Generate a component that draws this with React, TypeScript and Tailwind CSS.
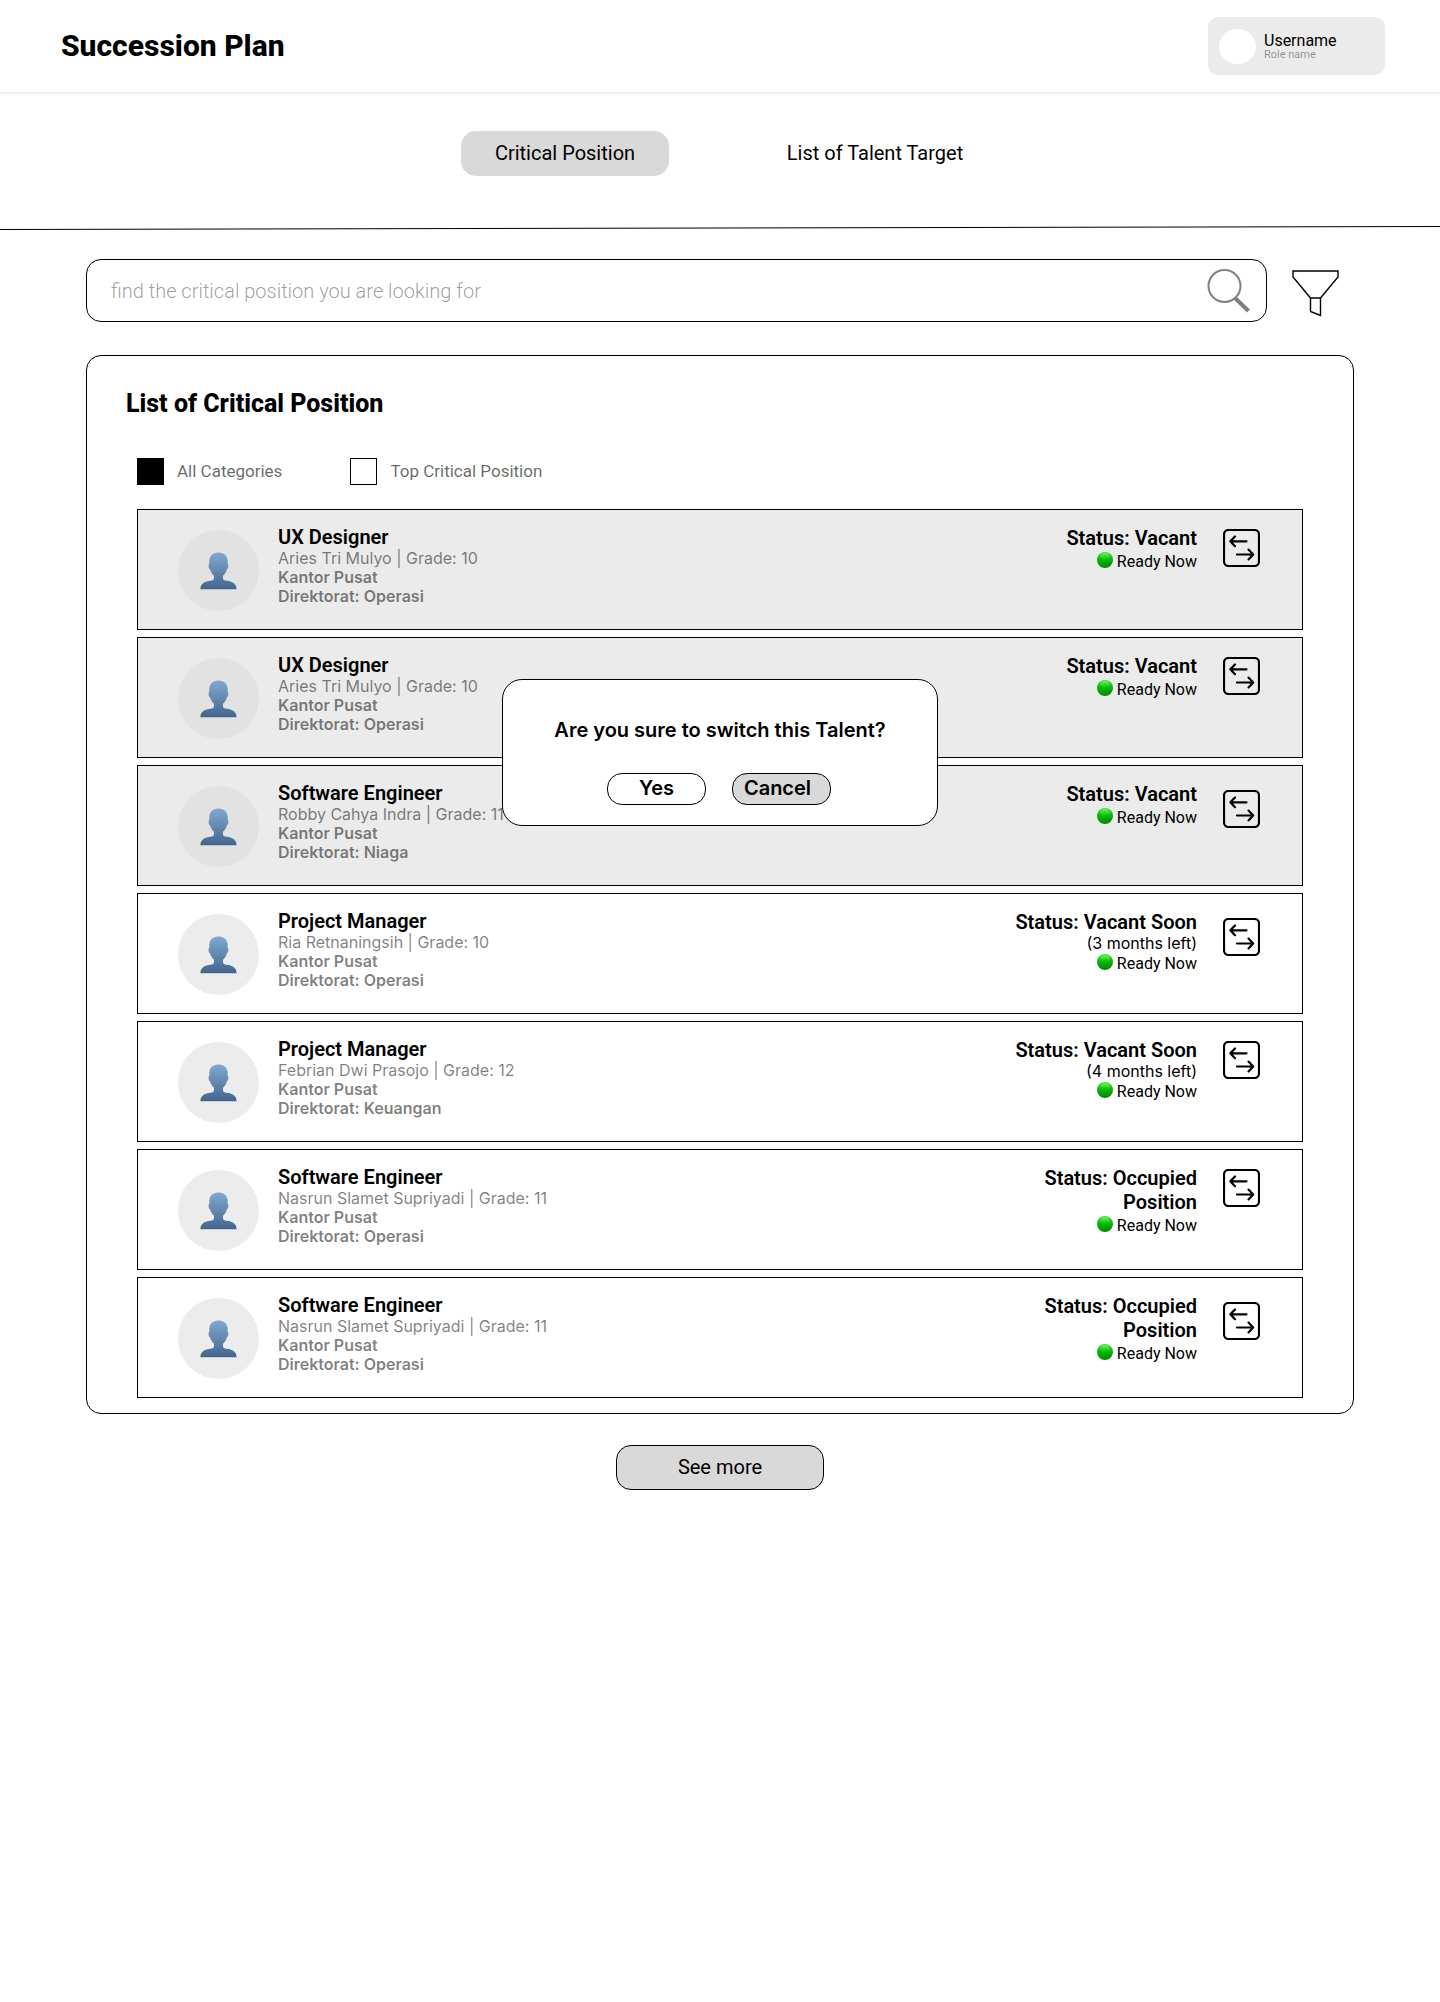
import React, { useState } from "react";

type Position = {
  title: string;
  holder: string;
  grade: number;
  directorate: string;
  status: string;
  monthsLeft?: number;
  highlighted?: boolean;
  lowSwitch?: boolean;
};

const positions: Position[] = [
  { title: "UX Designer", holder: "Aries Tri Mulyo", grade: 10, directorate: "Operasi", status: "Vacant", highlighted: true },
  { title: "UX Designer", holder: "Aries Tri Mulyo", grade: 10, directorate: "Operasi", status: "Vacant", highlighted: true },
  { title: "Software Engineer", holder: "Robby Cahya Indra", grade: 11, directorate: "Niaga", status: "Vacant", highlighted: true, lowSwitch: true },
  { title: "Project Manager", holder: "Ria Retnaningsih", grade: 10, directorate: "Operasi", status: "Vacant Soon", monthsLeft: 3, lowSwitch: true },
  { title: "Project Manager", holder: "Febrian Dwi Prasojo", grade: 12, directorate: "Keuangan", status: "Vacant Soon", monthsLeft: 4 },
  { title: "Software Engineer", holder: "Nasrun Slamet Supriyadi", grade: 11, directorate: "Operasi", status: "Occupied Position" },
  { title: "Software Engineer", holder: "Nasrun Slamet Supriyadi", grade: 11, directorate: "Operasi", status: "Occupied Position", lowSwitch: true },
];

function PersonIcon() {
  return (
    <svg width="37" height="38" viewBox="0 0 37 38" aria-hidden="true">
      <defs>
        <linearGradient id="person-fill" x1="0" y1="0" x2="0" y2="1">
          <stop offset="0" stopColor="#7fa9cc" />
          <stop offset="0.5" stopColor="#6289b0" />
          <stop offset="1" stopColor="#43648b" />
        </linearGradient>
      </defs>
      <path
        d="M18.5 0.5C12.6 0.5 9.3 4 9.3 9.5V12C8.2 12.6 8.3 16.4 10 17.2C10.8 20 12.3 22.2 14 23.8V26.2C14 27.6 12.6 28.4 10.6 28.8C4.6 29.6 0.7 31.4 0.3 37.3H36.7C36.3 31.4 32.4 29.6 26.4 28.8C24.4 28.4 23 27.6 23 26.2V23.8C24.7 22.2 26.2 20 27 17.2C28.7 16.4 28.8 12.6 27.7 12V9.5C27.7 4 24.4 0.5 18.5 0.5Z"
        fill="url(#person-fill)"
      />
    </svg>
  );
}

function GreenDot() {
  return (
    <svg width="16" height="16" viewBox="0 0 16 16" aria-hidden="true">
      <defs>
        <linearGradient id="dot-fill" x1="0" y1="0" x2="0" y2="1">
          <stop offset="0" stopColor="#3fd83a" />
          <stop offset="0.45" stopColor="#06b806" />
          <stop offset="1" stopColor="#008c00" />
        </linearGradient>
        <linearGradient id="dot-shine" x1="0" y1="0" x2="0" y2="1">
          <stop offset="0" stopColor="#6cff60" stopOpacity="0.85" />
          <stop offset="1" stopColor="#3fe038" stopOpacity="0" />
        </linearGradient>
      </defs>
      <circle cx="8" cy="8" r="8" fill="url(#dot-fill)" />
      <ellipse cx="8" cy="4.6" rx="5.2" ry="3.8" fill="url(#dot-shine)" />
    </svg>
  );
}

function SwitchIcon() {
  return (
    <svg width="37" height="38" viewBox="0 0 37 38" fill="none" stroke="black" strokeWidth="2.2" strokeLinecap="round" strokeLinejoin="round" aria-hidden="true">
      <rect x="1" y="1" width="35" height="36" rx="4.5" />
      <path d="M23.5 12.3H7.5M12 7.5L7.3 12.3L12 17.2" />
      <path d="M14 25.5H30M25.5 20.6L30.2 25.5L25.5 30.4" />
    </svg>
  );
}

function PositionRow({ item }: { item: Position }) {
  return (
    <li className={`flex h-[121px] items-start border border-black pt-4 pr-[42px] pl-10 ${item.highlighted ? "bg-[#ebebeb]" : "bg-white"}`}>
      <div className="mt-1 flex size-[81px] shrink-0 items-center justify-center rounded-full bg-[#d9d9d9]/50">
        <PersonIcon />
      </div>
      <div className="ml-[19px] flex-1 font-['Inter',sans-serif] text-base leading-[19px] text-black/50">
        <h3 className="font-['Roboto',sans-serif] text-xl leading-[23px] font-semibold text-black">{item.title}</h3>
        <p>{item.holder} | Grade: {item.grade}</p>
        <p className="font-semibold">Kantor Pusat</p>
        <p className="font-semibold">Direktorat: {item.directorate}</p>
      </div>
      <div className="flex w-[190px] flex-col items-end text-right">
        <p className={`text-xl leading-6 font-semibold ${item.status === "Occupied Position" ? "w-40" : "whitespace-nowrap"}`}>Status: {item.status}</p>
        {item.monthsLeft && (
          <p className="font-['Inter',sans-serif] text-base leading-[18px]">({item.monthsLeft} months left)</p>
        )}
        <p className="mt-0.5 flex items-start gap-1 text-base leading-5">
          <GreenDot />
          Ready Now
        </p>
      </div>
      <button type="button" aria-label={`Switch ${item.holder}`} className={`ml-[26px] ${item.lowSwitch ? "mt-2" : "mt-[3px]"}`}>
        <SwitchIcon />
      </button>
    </li>
  );
}

function Filter({ label, checked, onChange }: { label: string; checked: boolean; onChange: () => void }) {
  return (
    <label className="flex items-center gap-[13px] text-[17px] text-black/60">
      <input type="checkbox" checked={checked} onChange={onChange} className="size-[27px] appearance-none border border-black bg-white checked:bg-black" />
      {label}
    </label>
  );
}

function ConfirmDialog() {
  return (
    <div role="dialog" aria-labelledby="confirm-title" className="absolute top-[170px] left-1/2 flex h-[147px] w-[436px] -translate-x-1/2 flex-col items-center rounded-[20px] border border-black bg-white pt-[38px] font-['Inter',sans-serif] text-xl leading-6 font-semibold">
      <h2 id="confirm-title">Are you sure to switch this Talent?</h2>
      <div className="mt-[31px] flex gap-[26px] pr-0.5">
        <button type="button" className="h-8 w-[99px] rounded-[15px] border border-black bg-white pb-0.5">Yes</button>
        <button type="button" className="h-8 w-[99px] rounded-[15px] border border-black bg-[#d9d9d9] pr-2 pb-0.5">Cancel</button>
      </div>
    </div>
  );
}

export default function App() {
  const [onlyTop, setOnlyTop] = useState(false);
  return (
    <div className="min-h-screen bg-white font-['Roboto',sans-serif] text-black">
      <header className="flex h-[92px] items-center justify-between pr-[55px] pl-[61px] shadow-[0_1px_4px_rgba(0,0,0,0.12)]">
        <h1 className="text-3xl font-extrabold">Succession Plan</h1>
        <div className="flex h-[58px] w-[177px] items-center rounded-[10px] bg-[#ebebeb] pl-[11px]">
          <div className="h-[35px] w-[37px] rounded-[50%] bg-white" />
          <div className="ml-2 pt-0.5">
            <p className="text-base leading-4">Username</p>
            <p className="text-[11px] leading-3 text-black/40">Role name</p>
          </div>
        </div>
      </header>

      <nav className="flex justify-center gap-[81px] pt-[39px] pl-[21px] text-xl">
        <button type="button" className="h-[45px] w-[208px] rounded-[15px] bg-[#d9d9d9] pb-0.5">Critical Position</button>
        <button type="button" className="h-[45px] w-[250px] pb-0.5">List of Talent Target</button>
      </nav>
      <svg className="mt-[50px] block h-1 w-full" viewBox="0 0 1440 4" preserveAspectRatio="none" aria-hidden="true">
        <line x1="0" y1="3.5" x2="1440" y2="0.5" stroke="black" />
      </svg>

      <main className="px-[86px] pt-[29px]">
        <form className="flex items-center gap-[25px] pr-[15px]" onSubmit={(e) => e.preventDefault()}>
          <div className="flex h-[63px] flex-1 items-center rounded-[15px] border border-black pr-[15px] pl-6">
            <input
              type="text"
              aria-label="Search positions"
              placeholder="find the critical position you are looking for"
              className="flex-1 text-xl font-light outline-none placeholder:text-black/40"
            />
            <button type="submit" aria-label="Search">
              <svg width="44" height="44" viewBox="0 0 44 44" fill="none" stroke="#808080" aria-hidden="true">
                <circle cx="17.5" cy="17" r="16" strokeWidth="2" />
                <path d="M28 29L41.5 42" strokeWidth="4" />
              </svg>
            </button>
          </div>
          <button type="button" aria-label="Filter" className="pt-1">
            <svg width="47" height="48" viewBox="0 0 47 48" fill="none" stroke="black" strokeWidth="1.4" aria-hidden="true">
              <path d="M1 2H46V8L28.5 29H18.5L1 8Z" />
              <path d="M18.5 29V42.5L28.5 46.5V29" />
            </svg>
          </button>
        </form>

        <section className="mt-[33px] rounded-[15px] border border-black px-[50px] pt-8 pb-[15px]">
          <h2 className="-ml-[11px] text-[25px] leading-8 font-extrabold">List of Critical Position</h2>
          <div className="mt-[38px] flex gap-[68px]">
            <Filter label="All Categories" checked={!onlyTop} onChange={() => setOnlyTop(false)} />
            <Filter label="Top Critical Position" checked={onlyTop} onChange={() => setOnlyTop(true)} />
          </div>
          <div className="relative mt-6">
            <ul className="flex flex-col gap-[7px]">
              {positions.map((item, i) => (
                <PositionRow key={i} item={item} />
              ))}
            </ul>
            <ConfirmDialog />
          </div>
        </section>

        <div className="mt-[31px] flex justify-center">
          <button type="button" className="h-[45px] w-[208px] rounded-[15px] border border-black bg-[#d9d9d9] pb-0.5 text-xl">See more</button>
        </div>
      </main>
    </div>
  );
}
